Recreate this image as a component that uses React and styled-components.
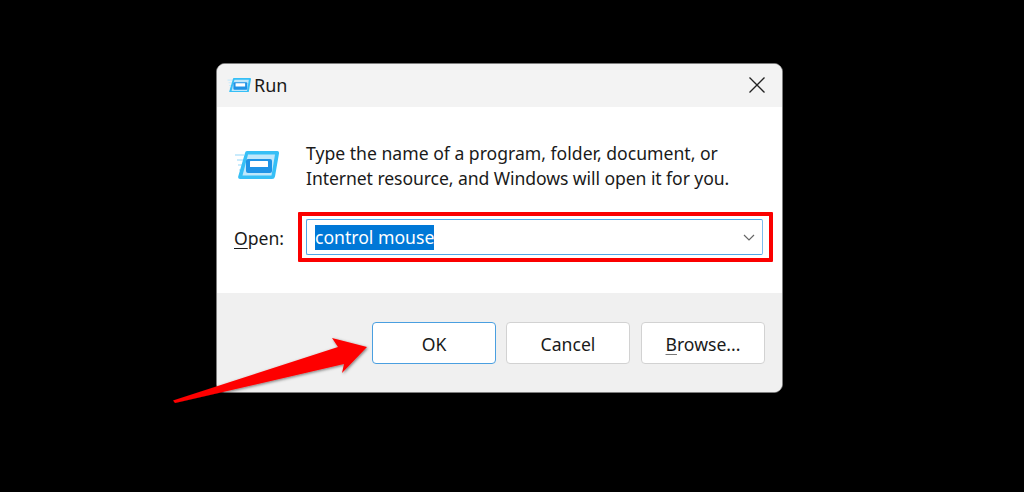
import React from "react";
import styled, { createGlobalStyle } from "styled-components";

const Global = createGlobalStyle`
  html, body { margin: 0; padding: 0; background: #000; }
  body { width: 1024px; height: 492px; overflow: hidden; font-family: "Noto Sans", "Open Sans", sans-serif; }
`;

const Page = styled.div`
  position: relative;
  width: 1024px;
  height: 492px;
  padding: 63px 0 0 216px;
  box-sizing: border-box;
  background: #000;
`;

const Dialog = styled.div`
  width: 567px;
  height: 330px;
  box-sizing: border-box;
  border: 1px solid #7d7d7d;
  border-radius: 9px;
  overflow: hidden;
  display: flex;
  flex-direction: column;
  background: #fff;
  color: #1a1a1a;
`;

const TitleBar = styled.div`
  height: 43px;
  flex: none;
  background: #f3f3f3;
  display: flex;
  align-items: center;
  padding: 0 17px 0 10px;
  gap: 3px;
`;

const TitleIconSlot = styled.div`
  flex: none;
  line-height: 0;
  margin-bottom: 1px;
`;

const TitleText = styled.span`
  font-size: 18px;
  line-height: 42px;
  flex: 1;
  margin-bottom: 2px;
`;

const CloseIcon = styled.svg`
  flex: none;
  margin-bottom: 2px;
`;

const Body = styled.div`
  flex: 1;
  padding: 34px 9px 0 17px;
  display: flex;
  flex-direction: column;
`;

const Message = styled.div`
  display: flex;
  align-items: flex-start;
  gap: 27px;
  height: 71px;
`;

const MessageIconSlot = styled.div`
  flex: none;
  margin-top: 10px;
  line-height: 0;
`;

const MessageText = styled.p`
  margin: 0;
  font-size: 17.6px;
  line-height: 24.5px;
  white-space: nowrap;
`;

const MessageLine = styled.span`
  display: block;
  letter-spacing: ${p => p.$tracking || "0"};
`;

const OpenRow = styled.div`
  display: flex;
  align-items: center;
  gap: 14px;
`;

const OpenLabel = styled.label`
  font-size: 17.6px;
  line-height: 24px;
  width: 50px;
  margin-top: 2px;
  u { text-underline-offset: 3px; }
`;

const Highlight = styled.div`
  flex: 1;
  height: 50px;
  box-sizing: border-box;
  border: 4px solid #fb0000;
  border-radius: 1px;
  display: flex;
  align-items: center;
  padding: 0 6px 0 4px;
`;

const Combo = styled.div`
  flex: 1;
  height: 36px;
  box-sizing: border-box;
  border: 1px solid #51a6e6;
  border-right-color: #7dbcee;
  border-radius: 2px;
  display: flex;
  align-items: center;
  justify-content: space-between;
  padding: 0 7px 0 8px;
`;

const Selected = styled.span`
  background: #0078d7;
  color: #fff;
  font-size: 17.6px;
  line-height: 25px;
  height: 25px;
  white-space: nowrap;
`;

const Footer = styled.div`
  height: 99px;
  flex: none;
  box-sizing: border-box;
  background: #f0f0f0;
  display: flex;
  justify-content: flex-end;
  gap: 11px;
  padding: 29px 17px 0 0;
`;

const Button = styled.button`
  width: 124px;
  height: 42px;
  box-sizing: border-box;
  background: #fff;
  border: 1px solid ${p => (p.$primary ? "#4a9fe0" : "#d2d2d2")};
  border-radius: 4px;
  color: #1a1a1a;
  font-family: inherit;
  font-size: 17.6px;
  padding: 2px 0 0;
  margin-right: ${p => (p.$primary ? "-1px" : "0")};
  u { text-underline-offset: 3px; text-decoration-color: #777; }
`;

const ArrowOverlay = styled.svg`
  position: absolute;
  left: 165px;
  top: 330px;
  pointer-events: none;
`;

function RunIcon({ width }) {
  return (
    <svg width={width} height={(width * 28) / 45} viewBox="0 0 45 28" style={{ display: "block" }}>
      <path d="M1 4h9M3 9h6M4 14h4M5 19h3" stroke="#c9ebfc" strokeWidth="2" />
      <path d="M11 2Q11.300 0 13 0H43Q45.300 0 45 2.500L41 25.500Q40.500 28 38 28H6Q3.700 28 4.200 25.500Z" fill="#36bff6" />
      <path d="M14 3.500H41L37.500 24.500H8.500Z" fill="#bfe7fb" />
      <rect x="12" y="8" width="26" height="14" rx="2" fill="#1f93e6" />
      <rect x="16" y="10" width="18" height="6" rx="0.500" fill="#fff" />
    </svg>
  );
}

export default function App() {
  return (
    <Page>
      <Global />
      <Dialog>
        <TitleBar>
          <TitleIconSlot><RunIcon width={24} /></TitleIconSlot>
          <TitleText>Run</TitleText>
          <CloseIcon width="16" height="16" viewBox="0 0 16 16">
            <path d="M0.500 0.500L15.500 15.500M15.500 0.500L0.500 15.500" stroke="#222" strokeWidth="1.300" />
          </CloseIcon>
        </TitleBar>
        <Body>
          <Message>
            <MessageIconSlot><RunIcon width={45} /></MessageIconSlot>
            <MessageText>
              <MessageLine>Type the name of a program, folder, document, or</MessageLine>
              <MessageLine $tracking="-0.08px">Internet resource, and Windows will open it for you.</MessageLine>
            </MessageText>
          </Message>
          <OpenRow>
            <OpenLabel><u>O</u>pen:</OpenLabel>
            <Highlight>
              <Combo>
                <Selected>control mouse</Selected>
                <svg width="12" height="7" viewBox="0 0 12 7">
                  <path d="M1 1L6 6L11 1" fill="none" stroke="#666" strokeWidth="1.200" />
                </svg>
              </Combo>
            </Highlight>
          </OpenRow>
        </Body>
        <Footer>
          <Button $primary>OK</Button>
          <Button>Cancel</Button>
          <Button><u>B</u>rowse...</Button>
        </Footer>
      </Dialog>
      <ArrowOverlay width="210" height="80" viewBox="0 0 210 80">
        <defs>
          <filter id="sh" x="-10%" y="-20%" width="120%" height="140%">
            <feDropShadow dx="1" dy="1" stdDeviation="1.500" floodColor="#000" floodOpacity="0.5" />
          </filter>
        </defs>
        <path d="M8 70.500L173 17L167 8L202 17L177 43L179 34L10 73Z" fill="#fe0000" filter="url(#sh)" />
      </ArrowOverlay>
    </Page>
  );
}
